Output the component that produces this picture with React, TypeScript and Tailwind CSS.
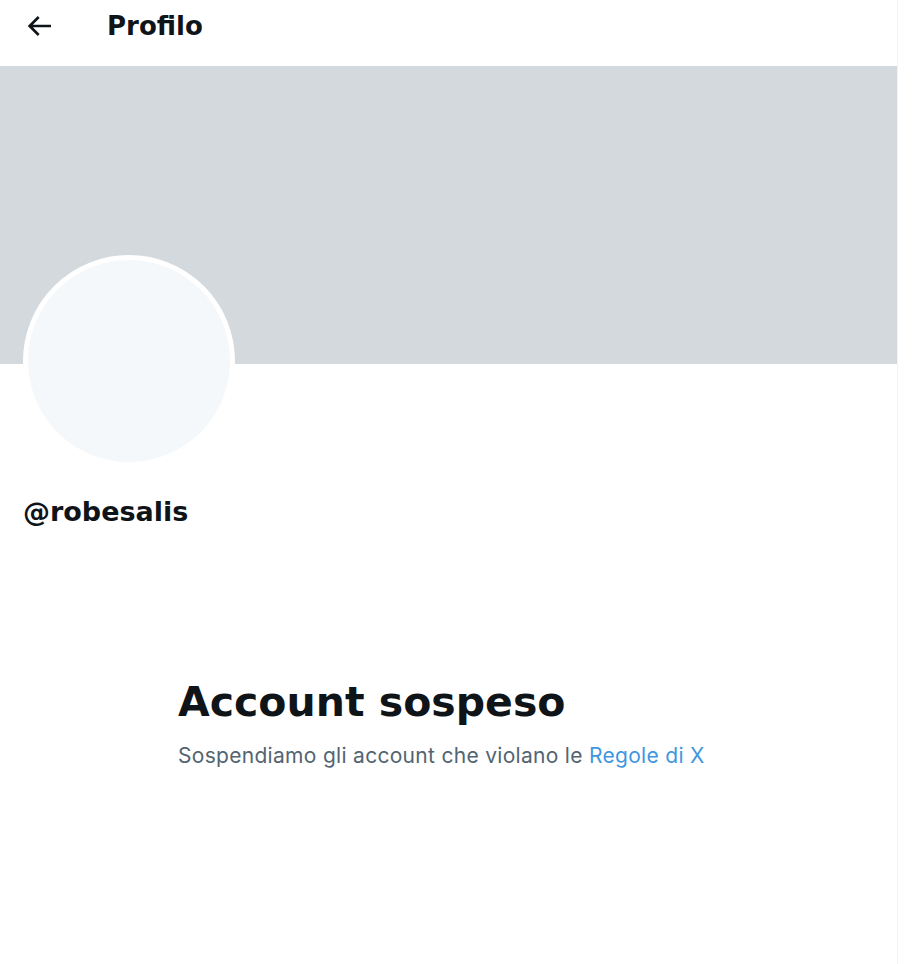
export default function App() {
  return (
    <div className="min-h-[964px] w-[922px] bg-white font-['Inter','Liberation_Sans',sans-serif] text-[#0f1419]">
      <div className="w-[898px] min-h-[964px] border-r border-[#eff3f4]">
        {/* header */}
        <div className="flex h-[66px] items-start pt-[10px]">
          <div className="flex h-[32px] w-[107px] items-center pl-[23px]">
            <svg viewBox="0 0 24 24" className="h-[32px] w-[32px] fill-[#0f1419]">
              <path d="M7.414 13l5.043 5.04-1.414 1.42L3.586 12l7.457-7.46 1.414 1.42L7.414 11H21v2H7.414z" />
            </svg>
          </div>
          <h1 className="font-['DejaVu_Sans',sans-serif] text-[26px] leading-[32px] font-bold">Profilo</h1>
        </div>

        {/* banner */}
        <div className="h-[298px] bg-[#d3d9dd]" />

        {/* avatar */}
        <div className="px-[23px]">
          <div className="-mt-[109px] h-[212px] w-[212px] rounded-full border-[5px] border-white bg-[#f5f8fa]" />
        </div>

        <div className="mt-[29px] px-[23px] font-['DejaVu_Sans',sans-serif] text-[27px] leading-[32px] font-bold">
          @robesalis
        </div>

        <div className="mt-[150px] pl-[178px]">
          <h2 className="font-['DejaVu_Sans',sans-serif] text-[41px] leading-[48px] font-bold">Account sospeso</h2>
          <p className="mt-[16px] text-[21px] leading-[28px] tracking-[0.3px] text-[#536471]">
            Sospendiamo gli account che violano le <span className="text-[#3f97df]">Regole di X</span>
          </p>
        </div>
      </div>
    </div>
  );
}
